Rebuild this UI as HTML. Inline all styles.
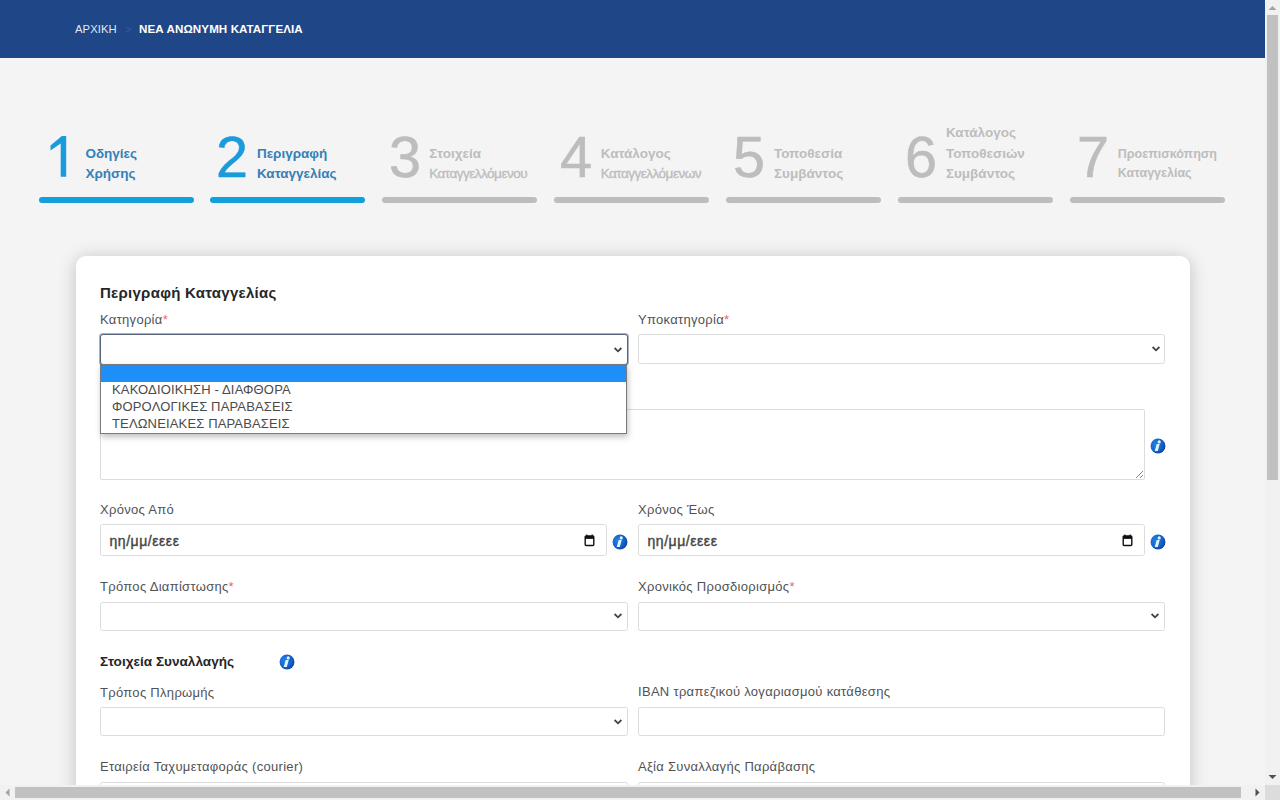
<!DOCTYPE html>
<html><head><meta charset="utf-8"><style>
html,body{margin:0;padding:0;width:1280px;height:800px;overflow:hidden;background:#f4f4f4;font-family:"Liberation Sans",sans-serif;}
#hdr{position:absolute;left:0;top:0;width:1265px;height:58px;background:#1f4687;}
.bar{position:absolute;top:197px;height:6px;border-radius:3px;background:#bdbdbd;}
#card{position:absolute;left:75.7px;top:255.7px;width:1114.4px;height:700px;background:#fff;border-radius:10px;box-shadow:0 2px 18px rgba(0,0,0,0.21);}
.inp{position:absolute;background:#fff;border:1px solid #dcdcdc;border-radius:2.5px;box-sizing:border-box;}
</style></head>
<body>
<svg width="0" height="0" style="position:absolute"><defs><radialGradient id="ig" cx="0.35" cy="0.4" r="0.7"><stop offset="0" stop-color="#2283ea"/><stop offset="0.65" stop-color="#1460c8"/><stop offset="1" stop-color="#0c3f94"/></radialGradient></defs></svg>
<div id="hdr"><div style="position:absolute;left:75px;top:23.89px;font-size:11.3px;line-height:11.3px;color:#dfe6f2;font-weight:normal;white-space:nowrap;letter-spacing:0.05px">ΑΡΧΙΚΗ</div>
<div style="position:absolute;left:125.3px;top:23.65px;font-size:11px;line-height:11px;color:#2d5a9b;font-weight:normal;white-space:nowrap;-webkit-text-stroke:0.3px #2d5a9b">&gt;</div>
<div style="position:absolute;left:139px;top:23.44px;font-size:11.6px;line-height:11.6px;color:#ffffff;font-weight:bold;white-space:nowrap;letter-spacing:0.08px">ΝΕΑ ΑΝΩΝΥΜΗ ΚΑΤΑΓΓΕΛΙΑ</div>
</div><svg style="position:absolute;left:0;top:0" width="100" height="200"><path d="M66.2 135.9 L66.2 176.7 L60.7 176.7 L60.7 143.4 L50.5 150.6 L50.5 145.4 L61.8 135.9 Z" fill="#1a9bdc"/></svg>
<div style="position:absolute;left:85.4px;top:167.22px;font-size:13.5px;line-height:13.5px;color:#3580b9;font-weight:bold;white-space:nowrap;">Χρήσης</div>
<div style="position:absolute;left:85.4px;top:146.62px;font-size:13.5px;line-height:13.5px;color:#3580b9;font-weight:bold;white-space:nowrap;">Οδηγίες</div>
<div class="bar" style="left:38.5px;width:155px;background:#129fdd"></div>
<div style="position:absolute;left:216px;top:128.53px;font-size:57.5px;line-height:57.5px;color:#1a9bdc;font-weight:normal;white-space:nowrap;-webkit-text-stroke:0.6px #1a9bdc">2</div>
<div style="position:absolute;left:256.9px;top:167.22px;font-size:13.5px;line-height:13.5px;color:#3580b9;font-weight:bold;white-space:nowrap;">Καταγγελίας</div>
<div style="position:absolute;left:256.9px;top:146.62px;font-size:13.5px;line-height:13.5px;color:#3580b9;font-weight:bold;white-space:nowrap;">Περιγραφή</div>
<div class="bar" style="left:210.4px;width:155px;background:#129fdd"></div>
<div style="position:absolute;left:389px;top:128.53px;font-size:57.5px;line-height:57.5px;color:#bdbdbd;font-weight:normal;white-space:nowrap;-webkit-text-stroke:0.6px #bdbdbd">3</div>
<div style="position:absolute;left:429.2px;top:167.22px;font-size:13.5px;line-height:13.5px;color:#bdbdbd;font-weight:normal;white-space:nowrap;letter-spacing:-0.5px;-webkit-text-stroke:0.35px #bdbdbd">Καταγγελλόμενου</div>
<div style="position:absolute;left:429.2px;top:146.62px;font-size:13.5px;line-height:13.5px;color:#bdbdbd;font-weight:bold;white-space:nowrap;">Στοιχεία</div>
<div class="bar" style="left:382.3px;width:155px;background:#bdbdbd"></div>
<div style="position:absolute;left:560px;top:128.53px;font-size:57.5px;line-height:57.5px;color:#bdbdbd;font-weight:normal;white-space:nowrap;-webkit-text-stroke:0.6px #bdbdbd">4</div>
<div style="position:absolute;left:600.7px;top:167.22px;font-size:13.5px;line-height:13.5px;color:#bdbdbd;font-weight:normal;white-space:nowrap;letter-spacing:-0.5px;-webkit-text-stroke:0.35px #bdbdbd">Καταγγελλόμενων</div>
<div style="position:absolute;left:600.7px;top:146.62px;font-size:13.5px;line-height:13.5px;color:#bdbdbd;font-weight:bold;white-space:nowrap;">Κατάλογος</div>
<div class="bar" style="left:554.2px;width:155px;background:#bdbdbd"></div>
<div style="position:absolute;left:733px;top:128.53px;font-size:57.5px;line-height:57.5px;color:#bdbdbd;font-weight:normal;white-space:nowrap;-webkit-text-stroke:0.6px #bdbdbd">5</div>
<div style="position:absolute;left:774.0px;top:167.22px;font-size:13.5px;line-height:13.5px;color:#bdbdbd;font-weight:bold;white-space:nowrap;">Συμβάντος</div>
<div style="position:absolute;left:774.0px;top:146.62px;font-size:13.5px;line-height:13.5px;color:#bdbdbd;font-weight:bold;white-space:nowrap;">Τοποθεσία</div>
<div class="bar" style="left:726.1px;width:155px;background:#bdbdbd"></div>
<div style="position:absolute;left:905px;top:128.53px;font-size:57.5px;line-height:57.5px;color:#bdbdbd;font-weight:normal;white-space:nowrap;-webkit-text-stroke:0.6px #bdbdbd">6</div>
<div style="position:absolute;left:945.9px;top:167.22px;font-size:13.5px;line-height:13.5px;color:#bdbdbd;font-weight:bold;white-space:nowrap;">Συμβάντος</div>
<div style="position:absolute;left:945.9px;top:146.62px;font-size:13.5px;line-height:13.5px;color:#bdbdbd;font-weight:bold;white-space:nowrap;">Τοποθεσιών</div>
<div style="position:absolute;left:945.9px;top:126.03px;font-size:13.5px;line-height:13.5px;color:#bdbdbd;font-weight:bold;white-space:nowrap;">Κατάλογος</div>
<div class="bar" style="left:898.0px;width:155px;background:#bdbdbd"></div>
<div style="position:absolute;left:1077px;top:128.53px;font-size:57.5px;line-height:57.5px;color:#bdbdbd;font-weight:normal;white-space:nowrap;-webkit-text-stroke:0.6px #bdbdbd">7</div>
<div style="position:absolute;left:1117.8px;top:148.47px;font-size:12.5px;line-height:12.5px;color:#bdbdbd;font-weight:bold;white-space:nowrap;">Προεπισκόπηση</div>
<div style="position:absolute;left:1117.8px;top:167.18px;font-size:12.5px;line-height:12.5px;color:#bdbdbd;font-weight:bold;white-space:nowrap;">Καταγγελίας</div>
<div class="bar" style="left:1069.9px;width:155px;background:#bdbdbd"></div>
<div id="card"></div>
<div style="position:absolute;left:100px;top:284.55px;font-size:15px;line-height:15px;color:#262626;font-weight:bold;white-space:nowrap;letter-spacing:0.27px">Περιγραφή Καταγγελίας</div>
<div style="position:absolute;left:100px;top:313.35px;font-size:13px;line-height:13px;color:#4f5257;font-weight:normal;white-space:nowrap;letter-spacing:0.3px">Κατηγορία<span style="color:#e26a6a">*</span></div>
<div style="position:absolute;left:638px;top:313.35px;font-size:13px;line-height:13px;color:#4f5257;font-weight:normal;white-space:nowrap;letter-spacing:0.3px">Υποκατηγορία<span style="color:#e26a6a">*</span></div>
<div class="inp" style="left:638px;top:334px;width:527px;height:30px;"></div>
<svg style="position:absolute;left:1150.5px;top:345px" width="10" height="8" viewBox="0 0 10 8"><path d="M1.6 2.0 L5 5.3 L8.4 2.0" fill="none" stroke="#444" stroke-width="1.8"/></svg>
<div class="inp" style="left:100px;top:409px;width:1045px;height:71px;border-radius:2px"></div>
<svg style="position:absolute;left:1135px;top:470px" width="9" height="9"><path d="M8 1 L1 8 M8 5 L5 8" stroke="#888" stroke-width="1"/></svg>
<svg style="position:absolute;left:1149.5px;top:437.5px" width="16" height="16" viewBox="0 0 16 16"><circle cx="8" cy="8" r="7.45" fill="url(#ig)"/><circle cx="9.2" cy="3.9" r="1.55" fill="#dff6ff"/><path d="M6.7 6.1 L9.7 6.1 L7.8 12.9 L4.7 12.9 Z" fill="#dff6ff"/></svg>
<div style="position:absolute;left:100px;top:503.35px;font-size:13px;line-height:13px;color:#4f5257;font-weight:normal;white-space:nowrap;letter-spacing:0.3px">Χρόνος Από</div>
<div style="position:absolute;left:638px;top:503.35px;font-size:13px;line-height:13px;color:#4f5257;font-weight:normal;white-space:nowrap;letter-spacing:0.3px">Χρόνος Έως</div>
<div class="inp" style="left:100px;top:524px;width:507px;height:32px;"></div>
<div style="position:absolute;left:109.5px;top:533.80px;font-size:14px;line-height:14px;color:#454545;font-weight:normal;white-space:nowrap;letter-spacing:0.55px;-webkit-text-stroke:0.4px #454545">ηη/μμ/εεεε</div>
<svg style="position:absolute;left:583.8px;top:533.5px" width="11" height="13" viewBox="0 0 11 13"><path d="M2.8 0.6 V2.2 M8.2 0.6 V2.2" stroke="#111" stroke-width="1.2"/><rect x="1.2" y="2.0" width="8.6" height="9.5" rx="0.9" fill="none" stroke="#111" stroke-width="1.4"/><rect x="1.2" y="2.0" width="8.6" height="2.9" fill="#111"/></svg>
<svg style="position:absolute;left:611.5px;top:533.5px" width="16" height="16" viewBox="0 0 16 16"><circle cx="8" cy="8" r="7.45" fill="url(#ig)"/><circle cx="9.2" cy="3.9" r="1.55" fill="#dff6ff"/><path d="M6.7 6.1 L9.7 6.1 L7.8 12.9 L4.7 12.9 Z" fill="#dff6ff"/></svg>
<div class="inp" style="left:638px;top:524px;width:507px;height:32px;"></div>
<div style="position:absolute;left:647.5px;top:533.80px;font-size:14px;line-height:14px;color:#454545;font-weight:normal;white-space:nowrap;letter-spacing:0.55px;-webkit-text-stroke:0.4px #454545">ηη/μμ/εεεε</div>
<svg style="position:absolute;left:1121.8px;top:533.5px" width="11" height="13" viewBox="0 0 11 13"><path d="M2.8 0.6 V2.2 M8.2 0.6 V2.2" stroke="#111" stroke-width="1.2"/><rect x="1.2" y="2.0" width="8.6" height="9.5" rx="0.9" fill="none" stroke="#111" stroke-width="1.4"/><rect x="1.2" y="2.0" width="8.6" height="2.9" fill="#111"/></svg>
<svg style="position:absolute;left:1149.5px;top:533.5px" width="16" height="16" viewBox="0 0 16 16"><circle cx="8" cy="8" r="7.45" fill="url(#ig)"/><circle cx="9.2" cy="3.9" r="1.55" fill="#dff6ff"/><path d="M6.7 6.1 L9.7 6.1 L7.8 12.9 L4.7 12.9 Z" fill="#dff6ff"/></svg>
<div style="position:absolute;left:100px;top:580.25px;font-size:13px;line-height:13px;color:#4f5257;font-weight:normal;white-space:nowrap;letter-spacing:0.3px">Τρόπος Διαπίστωσης<span style="color:#e26a6a">*</span></div>
<div style="position:absolute;left:638px;top:580.25px;font-size:13px;line-height:13px;color:#4f5257;font-weight:normal;white-space:nowrap;letter-spacing:0.3px">Χρονικός Προσδιορισμός<span style="color:#e26a6a">*</span></div>
<div class="inp" style="left:100px;top:602px;width:528px;height:29px;"></div>
<svg style="position:absolute;left:612.9px;top:612.2px" width="10" height="8" viewBox="0 0 10 8"><path d="M1.6 2.0 L5 5.3 L8.4 2.0" fill="none" stroke="#444" stroke-width="1.8"/></svg>
<div class="inp" style="left:638px;top:602px;width:527px;height:29px;"></div>
<svg style="position:absolute;left:1150.4px;top:612.2px" width="10" height="8" viewBox="0 0 10 8"><path d="M1.6 2.0 L5 5.3 L8.4 2.0" fill="none" stroke="#444" stroke-width="1.8"/></svg>
<div style="position:absolute;left:100px;top:654.74px;font-size:13.6px;line-height:13.6px;color:#262626;font-weight:bold;white-space:nowrap;">Στοιχεία Συναλλαγής</div>
<svg style="position:absolute;left:278.6px;top:653.9px" width="16" height="16" viewBox="0 0 16 16"><circle cx="8" cy="8" r="7.45" fill="url(#ig)"/><circle cx="9.2" cy="3.9" r="1.55" fill="#dff6ff"/><path d="M6.7 6.1 L9.7 6.1 L7.8 12.9 L4.7 12.9 Z" fill="#dff6ff"/></svg>
<div style="position:absolute;left:100px;top:686.25px;font-size:13px;line-height:13px;color:#4f5257;font-weight:normal;white-space:nowrap;letter-spacing:0.3px">Τρόπος Πληρωμής</div>
<div style="position:absolute;left:638px;top:685.25px;font-size:13px;line-height:13px;color:#4f5257;font-weight:normal;white-space:nowrap;letter-spacing:0.3px">IBAN τραπεζικού λογαριασμού κατάθεσης</div>
<div class="inp" style="left:100px;top:707px;width:528px;height:29px;"></div>
<svg style="position:absolute;left:612.9px;top:717.7px" width="10" height="8" viewBox="0 0 10 8"><path d="M1.6 2.0 L5 5.3 L8.4 2.0" fill="none" stroke="#444" stroke-width="1.8"/></svg>
<div class="inp" style="left:638px;top:707px;width:527px;height:29px;"></div>
<div style="position:absolute;left:100px;top:759.55px;font-size:13px;line-height:13px;color:#4f5257;font-weight:normal;white-space:nowrap;letter-spacing:0.3px">Εταιρεία Ταχυμεταφοράς (courier)</div>
<div style="position:absolute;left:638px;top:759.55px;font-size:13px;line-height:13px;color:#4f5257;font-weight:normal;white-space:nowrap;letter-spacing:0.3px">Αξία Συναλλαγής Παράβασης</div>
<div class="inp" style="left:100px;top:782px;width:528px;height:30px;"></div>
<div class="inp" style="left:638px;top:782px;width:527px;height:30px;"></div>
<div class="inp" style="left:99.5px;top:334px;width:528.0px;height:30.5px;border:1px solid #56647e;border-radius:3px;box-shadow:0 0 0 1px rgba(100,115,140,0.55)"></div>
<svg style="position:absolute;left:612.8px;top:345.5px" width="10" height="8" viewBox="0 0 10 8"><path d="M1.6 2.0 L5 5.3 L8.4 2.0" fill="none" stroke="#444" stroke-width="1.8"/></svg>
<div style="position:absolute;left:99.5px;top:364px;width:525.5px;height:67.5px;background:#fff;border:1px solid #7a7a7a;box-shadow:1px 3px 6px rgba(0,0,0,0.25);"></div>
<div style="position:absolute;left:100.5px;top:364.5px;width:525.5px;height:17px;background:#1e8ff8"></div>
<div style="position:absolute;left:112px;top:383.35px;font-size:13px;line-height:13px;color:#4a4a4a;font-weight:normal;white-space:nowrap;letter-spacing:0.15px">ΚΑΚΟΔΙΟΙΚΗΣΗ - ΔΙΑΦΘΟΡΑ</div>
<div style="position:absolute;left:112px;top:399.95px;font-size:13px;line-height:13px;color:#4a4a4a;font-weight:normal;white-space:nowrap;letter-spacing:0.15px">ΦΟΡΟΛΟΓΙΚΕΣ ΠΑΡΑΒΑΣΕΙΣ</div>
<div style="position:absolute;left:112px;top:416.95px;font-size:13px;line-height:13px;color:#4a4a4a;font-weight:normal;white-space:nowrap;letter-spacing:0.15px">ΤΕΛΩΝΕΙΑΚΕΣ ΠΑΡΑΒΑΣΕΙΣ</div>
<div style="position:absolute;left:1265px;top:0;width:15px;height:785px;background:#f1f1f1"></div>
<div style="position:absolute;left:1267px;top:15px;width:11px;height:465px;background:#c1c1c1"></div>
<svg style="position:absolute;left:1265px;top:0" width="15" height="15"><path d="M3.5 10 L7.5 6 L11.5 10 Z" fill="#a3a3a3"/></svg>
<svg style="position:absolute;left:1265px;top:770px" width="15" height="15"><path d="M3.5 5 L7.5 9 L11.5 5 Z" fill="#505050"/></svg>
<div style="position:absolute;left:0;top:785px;width:1265px;height:15px;background:#f1f1f1"></div>
<div style="position:absolute;left:15px;top:787px;width:1226px;height:11px;background:#c1c1c1"></div>
<svg style="position:absolute;left:0;top:785px" width="15" height="15"><path d="M9.5 3.5 L5.5 7.5 L9.5 11.5 Z" fill="#a3a3a3"/></svg>
<svg style="position:absolute;left:1250px;top:785px" width="15" height="15"><path d="M5.5 3.5 L9.5 7.5 L5.5 11.5 Z" fill="#505050"/></svg>
<div style="position:absolute;left:1265px;top:785px;width:15px;height:15px;background:#dcdcdc"></div>

</body></html>
